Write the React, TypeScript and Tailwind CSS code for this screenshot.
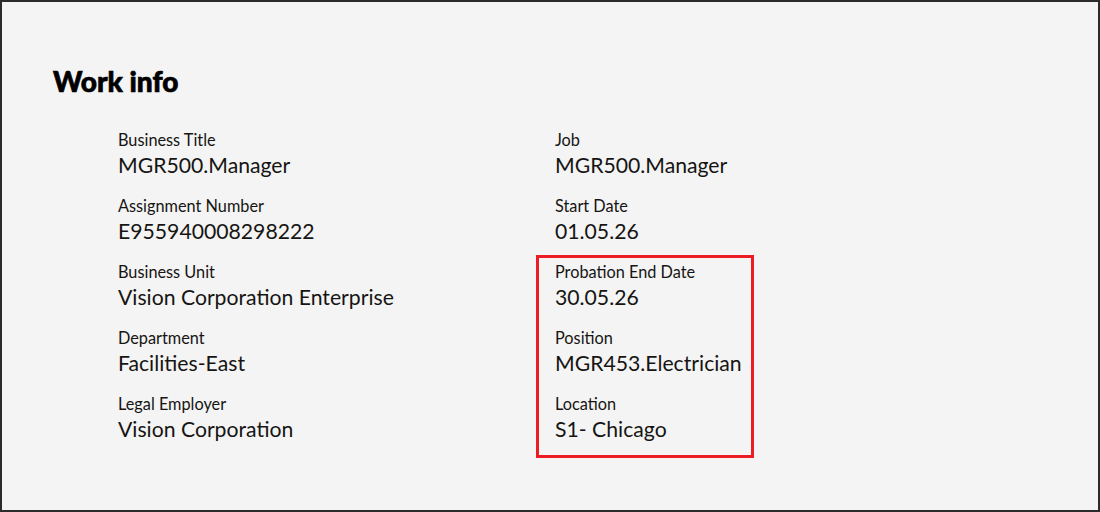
const left = [
  { label: "Business Title", value: "MGR500.Manager" },
  { label: "Assignment Number", value: "E955940008298222" },
  { label: "Business Unit", value: "Vision Corporation Enterprise" },
  { label: "Department", value: "Facilities-East" },
  { label: "Legal Employer", value: "Vision Corporation" },
];

const right = [
  { label: "Job", value: "MGR500.Manager" },
  { label: "Start Date", value: "01.05.26" },
  { label: "Probation End Date", value: "30.05.26" },
  { label: "Position", value: "MGR453.Electrician" },
  { label: "Location", value: "S1- Chicago" },
];

function Field({ label, value }: { label: string; value: string }) {
  return (
    <div className="flex flex-col h-[48px]">
      <span className="text-[16.3px] leading-[20px]">{label}</span>
      <span className="text-[21.2px] leading-[26px] mt-[2px] whitespace-nowrap">{value}</span>
    </div>
  );
}

export default function App() {
  return (
    <div
      className="w-[1100px] h-[512px] box-border border-2 border-[#2b2b2b] bg-[#f4f4f4] text-[#161513] pl-[51px] pt-[62px]"
      style={{ fontFamily: "Lato, 'Noto Sans', sans-serif" }}
    >
      <h2 className="text-[28px] leading-[34px] font-black text-black [-webkit-text-stroke:0.7px_#000]">Work info</h2>
      <div className="grid grid-cols-[437px_1fr] ml-[65px] mt-[32px]">
        <div className="flex flex-col gap-[18px]">
          {left.map((f) => (
            <Field key={f.label} {...f} />
          ))}
        </div>
        <div className="relative flex flex-col gap-[18px]">
          {right.map((f) => (
            <Field key={f.label} {...f} />
          ))}
          <div className="absolute left-[-19px] top-[125px] w-[218px] h-[203px] border-[3px] border-[#ed1c24] pointer-events-none" />
        </div>
      </div>
    </div>
  );
}
